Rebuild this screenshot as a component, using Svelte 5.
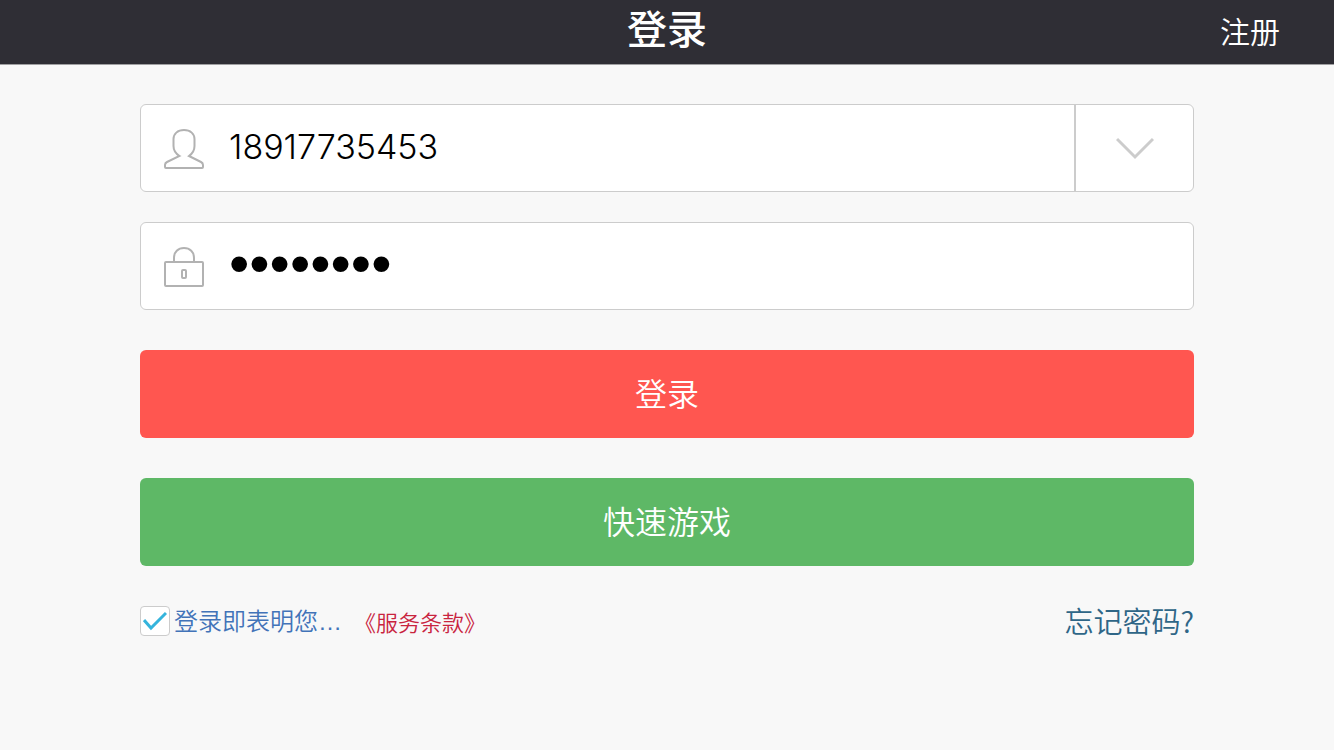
<script lang="ts">
  let account = $state("18917735453");
  let password = $state("password");
  let agreed = $state(true);
</script>

<header class="bar">
  <h1>登录</h1>
  <a class="register" href="#register">注册</a>
</header>

<form class="login" onsubmit={(e) => e.preventDefault()}>
  <div class="field">
    <label for="account" aria-label="账号">
      <svg width="42" height="42" viewBox="0 0 42 42">
        <path
          d="M21 2C14.500 2 10.500 6 10.500 11V18C10.500 22 12.500 25.500 16.500 28L4 34Q2 35 2 37V39Q2 40 3 40H39Q40 40 40 39V37Q40 35 38 34L26 28C29.500 25.500 31.500 22 31.500 18V11C31.500 6 27.500 2 21 2Z"
        />
      </svg>
    </label>
    <input id="account" type="text" bind:value={account} />
    <button type="button" class="more" aria-label="选择账号">
      <svg width="38" height="24" viewBox="0 0 38 24">
        <path d="M1 2L19 20L37 2" />
      </svg>
    </button>
  </div>

  <div class="field">
    <label for="password" aria-label="密码">
      <svg width="42" height="42" viewBox="0 0 42 42">
        <rect x="2" y="16" width="38" height="24" rx="1" />
        <path d="M11 16V12C11 6 15 2 21 2S31 6 31 12V16" />
        <rect x="19" y="24" width="4" height="8" rx="1" />
      </svg>
    </label>
    <input id="password" type="password" bind:value={password} />
  </div>

  <button type="submit" class="action">登录</button>
  <button type="button" class="action quick">快速游戏</button>

  <div class="footer">
    <label class="agree">
      <input type="checkbox" bind:checked={agreed} />
      <span class="box">
        {#if agreed}
          <svg width="24" height="20" viewBox="0 0 24 20">
            <path d="M1 9L8 17L23 2" />
          </svg>
        {/if}
      </span>
      <span class="notice">登录即表明您…</span>
    </label>
    <a class="terms" href="#terms">《服务条款》</a>
    <a class="forgot" href="#forgot">忘记密码?</a>
  </div>
</form>

<style>
  :global(body) {
    background: #f8f8f8;
    font-family: "Noto Sans CJK SC", sans-serif;
    font-weight: 350;
  }

  a {
    text-decoration: none;
  }

  svg {
    display: block;
    fill: none;
    stroke: #b2b2b2;
    stroke-width: 2px;
  }

  .bar {
    display: grid;
    grid-template-columns: 1fr auto 1fr;
    height: 64px;
    background: #2f2e35;
    border-bottom: 1px solid #a0a0a2;
  }

  h1 {
    grid-column: 2;
    margin: 0;
    color: #fff;
    font-family: "Liberation Sans", "Noto Sans CJK SC", sans-serif;
    font-size: 40px;
    font-weight: 500;
    line-height: 60px;
  }

  .register {
    justify-self: end;
    padding-right: 54px;
    color: #fff;
    font-size: 30px;
    line-height: 60px;
  }

  .login {
    display: flex;
    flex-direction: column;
    padding: 39px 140px;
  }

  .field {
    display: flex;
    align-items: center;
    box-sizing: border-box;
    height: 88px;
    margin-bottom: 30px;
    padding-left: 22px;
    background: #fff;
    border: 1px solid #ccc;
    border-radius: 6px;
  }

  .field label {
    padding-top: 2px;
  }

  .field input {
    flex: 1;
    min-width: 0;
    box-sizing: border-box;
    height: 86px;
    margin-left: 24px;
    padding: 0 0 4px;
    border: none;
    outline: none;
    background: none;
    color: #000;
    font-family: Inter, sans-serif;
    font-size: 34px;
    font-weight: 350;
  }

  .field input[type="password"] {
    padding-bottom: 8px;
    font-family: "Liberation Sans", sans-serif;
    font-size: 58px;
  }

  .more {
    display: flex;
    align-items: center;
    justify-content: center;
    align-self: stretch;
    box-sizing: border-box;
    width: 119px;
    padding: 2px 0 0;
    border: none;
    border-left: 2px solid #ccc;
    background: none;
  }

  .more svg {
    stroke: #ccc;
    stroke-width: 3px;
  }

  .action {
    height: 88px;
    margin: 10px 0 30px;
    padding: 0 0 4px;
    border: none;
    border-radius: 6px;
    background: #ff5650;
    color: #fff;
    font: inherit;
    font-size: 32px;
  }

  .quick {
    background: #5eb866;
  }

  .footer {
    display: flex;
    align-items: center;
    height: 30px;
    margin-top: 10px;
  }

  .agree {
    display: flex;
    align-items: center;
    gap: 4px;
    color: #4273b8;
    font-size: 24px;
  }

  .agree input {
    position: absolute;
    opacity: 0;
  }

  .notice {
    padding-top: 2px;
    font-family: "Liberation Sans", "Noto Sans CJK SC", sans-serif;
    line-height: 30px;
  }

  .box {
    display: flex;
    align-items: center;
    justify-content: center;
    box-sizing: border-box;
    width: 30px;
    height: 30px;
    border: 1px solid #ccc;
    border-radius: 4px;
    background: #fff;
  }

  .box svg {
    stroke: #35b4dc;
    stroke-width: 3px;
  }

  .terms {
    margin-left: 12px;
    color: #c9243f;
    font-size: 22px;
  }

  .forgot {
    margin-left: auto;
    padding-bottom: 2px;
    color: #2f6687;
    font-size: 29px;
  }
</style>
